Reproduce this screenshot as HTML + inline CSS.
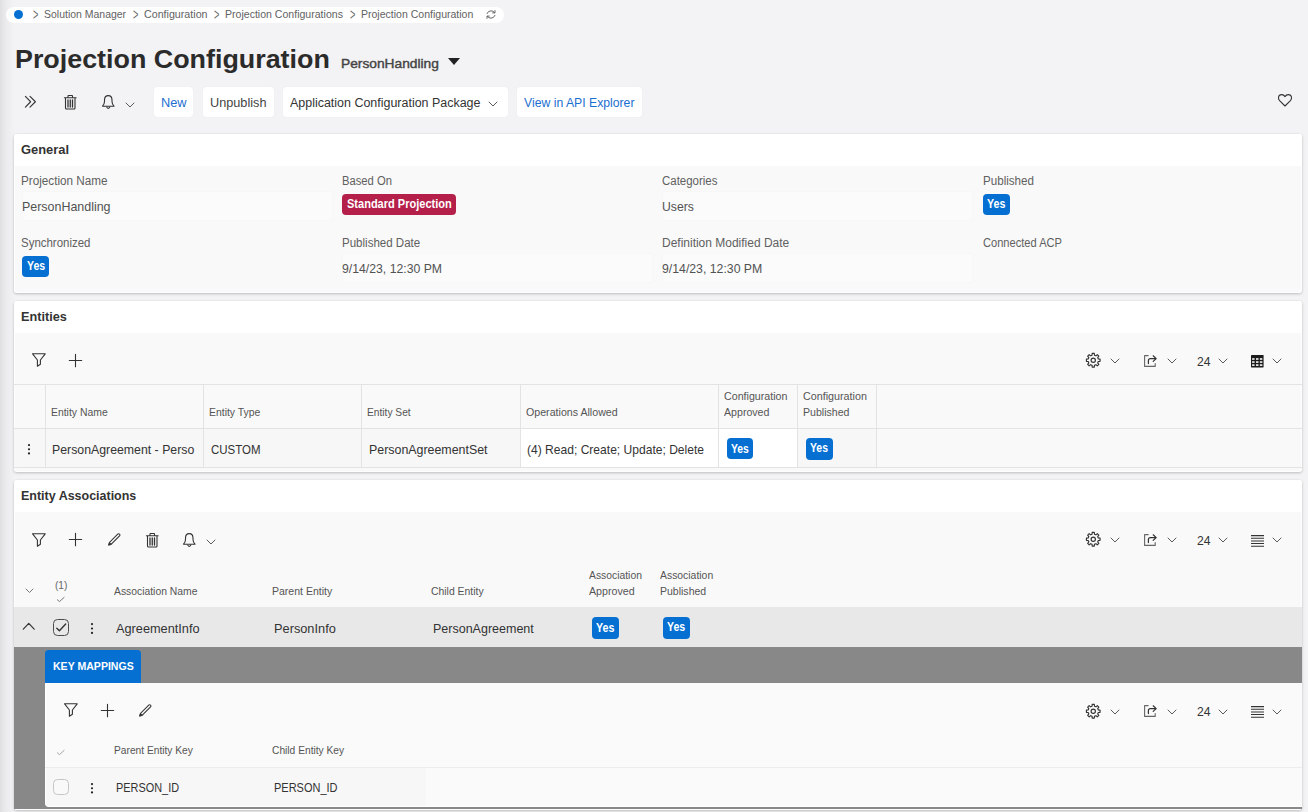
<!DOCTYPE html>
<html lang="en"><head><meta charset="utf-8"><title>Projection Configuration</title>
<style>
*{box-sizing:border-box;margin:0;padding:0}
html,body{width:1308px;height:812px;overflow:hidden;background:#f3f2f4;font-family:"Liberation Sans",sans-serif}
#root{position:relative;width:1308px;height:812px;overflow:hidden;background:linear-gradient(90deg,#dfdee1 0,#e6e5e8 3px,#ecebee 7px,#f1f0f3 12px,#f3f2f4 16px,#f3f2f4 100%)}
.t{position:absolute;white-space:nowrap;display:block;transform-origin:0 50%}
.b{position:absolute;display:block}
svg{position:absolute;overflow:visible}
.card{position:absolute;background:#f9f9f9;border-radius:3px;box-shadow:0 1px 3px rgba(0,0,0,.22),0 0 1px rgba(0,0,0,.12),inset 0 0 0 1px rgba(255,255,255,.85)}
.hd{position:absolute;left:0;top:0;right:0;background:#fff;border-radius:3px 3px 0 0}
.btn{position:absolute;background:#fff;border-radius:3px;box-shadow:0 0 1px rgba(0,0,0,.10)}
.fld{position:absolute;background:#fbfbfb;border:1px solid #f7f7f7;border-radius:2px}
.yes{position:absolute;background:#0670d2;border-radius:4px;width:26.8px;height:21.2px}
.vl{position:absolute;width:1px;background:#e3e3e3}
.hl{position:absolute;height:1px;background:#e3e3e3}

</style></head><body>
<div id="root">
<div class="b" style="left:5.5px;top:7px;width:498.5px;height:15.6px;border-radius:8px;background:#fff"></div>
<div class="b" style="left:13.6px;top:10.2px;width:9.2px;height:9.2px;border-radius:50%;background:#0670d2"></div>
<span class="t" style="left:33.050000000000004px;top:7.1px;font-size:11px;line-height:14px;color:#6a6a6a;transform-origin:0 50%;transform:scale(0.84,1.42)">&gt;</span>
<span class="t" style="left:133.04999999999998px;top:7.1px;font-size:11px;line-height:14px;color:#6a6a6a;transform-origin:0 50%;transform:scale(0.84,1.42)">&gt;</span>
<span class="t" style="left:213.64999999999998px;top:7.1px;font-size:11px;line-height:14px;color:#6a6a6a;transform-origin:0 50%;transform:scale(0.84,1.42)">&gt;</span>
<span class="t" style="left:349.65px;top:7.1px;font-size:11px;line-height:14px;color:#6a6a6a;transform-origin:0 50%;transform:scale(0.84,1.42)">&gt;</span>
<svg style="left:486px;top:10.3px" width="10" height="9" viewBox="0 0 10 9" fill="none" stroke="#333" stroke-width="1.1" stroke-linecap="round" stroke-linejoin="round"><path d="M1 3.6 Q2.2 0.8 5 0.8 Q7.3 0.8 8.6 2.6 M9 0.6 V2.9 H6.7 M9 5.4 Q7.8 8.2 5 8.2 Q2.7 8.2 1.4 6.4 M1 8.4 V6.1 H3.3" stroke="#555" stroke-width="0.9"/></svg>
<svg style="left:448px;top:58px" width="12" height="7" viewBox="0 0 12 7"><path d="M0 0 H12 L6 7 Z" fill="#222"/></svg>
<svg style="left:25px;top:96.2px" width="11" height="11.5" viewBox="0 0 11 11.5" fill="none" stroke="#333" stroke-width="1.1" stroke-linecap="round" stroke-linejoin="round"><path d="M0.4 0.4 L5.6 5.75 L0.4 11.1 M5 0.4 L10.4 5.75 L5 11.1"/></svg>
<svg style="left:64.4px;top:94.9px" width="12.5" height="14.5" viewBox="0 0 12.5 14.5" fill="none" stroke="#333" stroke-width="1.1" stroke-linecap="round" stroke-linejoin="round"><path d="M0.4 2.8 H12.1 M4 2.6 V1 Q4 0.5 4.5 0.5 H8 Q8.5 0.5 8.5 1 V2.6 M1.5 3 V13 Q1.5 14 2.5 14 H10 Q11 14 11 13 V3"/><path d="M4 5 V12 M6.25 5 V12 M8.5 5 V12" stroke-width="1.3"/></svg>
<svg style="left:101.8px;top:94.9px" width="12.5" height="14.3" viewBox="0 0 12.5 14.3" fill="none" stroke="#333" stroke-width="1.1" stroke-linecap="round" stroke-linejoin="round"><path d="M0.5 11.2 H12 Q10 9 10 6.5 V5 Q10 0.6 6.25 0.6 Q2.5 0.6 2.5 5 V6.5 Q2.5 9 0.5 11.2 Z"/><path d="M4.8 12.2 Q6.25 14.6 7.7 12.2"/></svg>
<svg style="left:125.0px;top:101.5px" width="10" height="6" viewBox="0 0 10 6" fill="none" stroke="#5a5a5a" stroke-width="1.0" stroke-linecap="round" stroke-linejoin="round"><path d="M1 1 L5.0 5 L9 1"/></svg>
<div class="btn" style="left:154px;top:87px;width:39px;height:30px"></div>
<div class="btn" style="left:202.5px;top:87px;width:71.5px;height:30px"></div>
<div class="btn" style="left:283px;top:87px;width:224.5px;height:30px"></div>
<div class="btn" style="left:516.5px;top:87px;width:125.5px;height:30px"></div>
<svg style="left:487.5px;top:101.0px" width="10" height="6" viewBox="0 0 10 6" fill="none" stroke="#5a5a5a" stroke-width="1.0" stroke-linecap="round" stroke-linejoin="round"><path d="M1 1 L5.0 5 L9 1"/></svg>
<svg style="left:1277.5px;top:94.4px" width="14" height="12.5" viewBox="0 0 14 12.5" fill="none" stroke="#333" stroke-width="1.1" stroke-linecap="round" stroke-linejoin="round"><path d="M7 12 L1.6 6.6 Q0.5 5.4 0.5 4 Q0.5 0.6 3.8 0.6 Q5.8 0.6 7 2.6 Q8.2 0.6 10.2 0.6 Q13.5 0.6 13.5 4 Q13.5 5.4 12.4 6.6 Z"/></svg>
<div class="card" style="left:14px;top:134px;width:1288px;height:158.5px"><div class="hd" style="height:31.5px"></div></div>
<div class="fld" style="left:21.5px;top:190.5px;width:311px;height:30.5px"></div>
<div class="fld" style="left:662px;top:190.5px;width:311px;height:30.5px"></div>
<div class="fld" style="left:342px;top:252.5px;width:311px;height:30.5px"></div>
<div class="fld" style="left:662px;top:252.5px;width:311px;height:30.5px"></div>
<div class="b" style="left:342.25px;top:194.25px;width:113.25px;height:21px;border-radius:4px;background:#b5204b"></div>
<div class="yes" style="left:983.2px;top:194.1px"></div>
<div class="yes" style="left:22.25px;top:256px"></div>
<div class="card" style="left:14px;top:301px;width:1288px;height:171px"><div class="hd" style="height:32px"></div></div>
<svg style="left:32px;top:353.25px" width="14" height="14" viewBox="0 0 14 14" fill="none" stroke="#333" stroke-width="1.1" stroke-linecap="round" stroke-linejoin="round"><path d="M0.6 0.8 H13.2 L8.4 7 V11.2 L5.4 13.2 V7 Z"/></svg>
<svg style="left:69px;top:353.6px" width="13" height="13" viewBox="0 0 13 13" fill="none" stroke="#333" stroke-width="1.1" stroke-linecap="round" stroke-linejoin="round"><path d="M6.5 0.3 V12.7 M0.3 6.5 H12.7"/></svg>
<svg style="left:1084.5px;top:352.15px" width="16.5" height="16.5" viewBox="0 0 16.5 16.5" fill="none" stroke="#333" stroke-width="1.1" stroke-linecap="round" stroke-linejoin="round"><path d="M13.31 7.04 L15.07 7.17 L15.07 9.33 L13.31 9.46 L12.68 10.97 L13.83 12.31 L12.31 13.83 L10.97 12.68 L9.46 13.31 L9.33 15.07 L7.17 15.07 L7.04 13.31 L5.53 12.68 L4.19 13.83 L2.67 12.31 L3.82 10.97 L3.19 9.46 L1.43 9.33 L1.43 7.17 L3.19 7.04 L3.82 5.53 L2.67 4.19 L4.19 2.67 L5.53 3.82 L7.04 3.19 L7.17 1.43 L9.33 1.43 L9.46 3.19 L10.97 3.82 L12.31 2.67 L13.83 4.19 L12.68 5.53 Z" stroke-width="1.15"/><circle cx="8.25" cy="8.25" r="2.15" stroke-width="1.15"/></svg>
<svg style="left:1109.5px;top:358.0px" width="10" height="6" viewBox="0 0 10 6" fill="none" stroke="#5a5a5a" stroke-width="1.0" stroke-linecap="round" stroke-linejoin="round"><path d="M1 1 L5.0 5 L9 1"/></svg>
<svg style="left:1143.75px;top:354.59999999999997px" width="13" height="12" viewBox="0 0 13 12" fill="none" stroke="#333" stroke-width="1.1" stroke-linecap="round" stroke-linejoin="round"><path d="M4.2 0.6 H0.6 V11.4 H11.2 V8.6" stroke="#666"/><path d="M4.4 8.6 V5.6 Q4.4 3.6 6.4 3.6 H11.6 M9.2 0.8 L12.2 3.6 L9.2 6.4" stroke-width="1.2"/></svg>
<svg style="left:1167.0px;top:358.0px" width="10" height="6" viewBox="0 0 10 6" fill="none" stroke="#5a5a5a" stroke-width="1.0" stroke-linecap="round" stroke-linejoin="round"><path d="M1 1 L5.0 5 L9 1"/></svg>
<svg style="left:1218.0px;top:358.0px" width="10" height="6" viewBox="0 0 10 6" fill="none" stroke="#5a5a5a" stroke-width="1.0" stroke-linecap="round" stroke-linejoin="round"><path d="M1 1 L5.0 5 L9 1"/></svg>
<svg style="left:1250.6px;top:355.4px" width="12.6" height="12.4" viewBox="0 0 12.6 12.4"><rect x="0" y="0" width="12.6" height="12.4" rx="0.6" fill="#1c1c1c"/><g fill="#f9f9f9"><rect x="1.10" y="3.20" width="2.5" height="1.6"/><rect x="5.00" y="3.20" width="2.5" height="1.6"/><rect x="8.85" y="3.20" width="2.5" height="1.6"/><rect x="1.10" y="6.25" width="2.5" height="1.6"/><rect x="5.00" y="6.25" width="2.5" height="1.6"/><rect x="8.85" y="6.25" width="2.5" height="1.6"/><rect x="1.10" y="9.30" width="2.5" height="1.6"/><rect x="5.00" y="9.30" width="2.5" height="1.6"/><rect x="8.85" y="9.30" width="2.5" height="1.6"/></g></svg>
<svg style="left:1272.0px;top:358.0px" width="10" height="6" viewBox="0 0 10 6" fill="none" stroke="#5a5a5a" stroke-width="1.0" stroke-linecap="round" stroke-linejoin="round"><path d="M1 1 L5.0 5 L9 1"/></svg>
<div class="hl" style="left:14px;top:384px;width:1288px"></div>
<div class="hl" style="left:14px;top:428px;width:1288px"></div>
<div class="hl" style="left:14px;top:467px;width:1288px"></div>
<div class="b" style="left:14px;top:429px;width:506px;height:38px;background:#f7f7f7"></div>
<div class="b" style="left:520px;top:429px;width:277px;height:38px;background:#fff"></div>
<div class="b" style="left:797px;top:429px;width:79px;height:38px;background:#f7f7f7"></div>
<div class="vl" style="left:45px;top:385px;height:82px"></div>
<div class="vl" style="left:203px;top:385px;height:82px"></div>
<div class="vl" style="left:361px;top:385px;height:82px"></div>
<div class="vl" style="left:520px;top:385px;height:82px"></div>
<div class="vl" style="left:718px;top:385px;height:82px"></div>
<div class="vl" style="left:797px;top:385px;height:82px"></div>
<div class="vl" style="left:876px;top:385px;height:82px"></div>
<svg style="left:26.75px;top:444.25px" width="4" height="10.5" viewBox="0 0 4 10.5"><circle cx="2" cy="1.1" r="1.1" fill="#222"/><circle cx="2" cy="5.25" r="1.1" fill="#222"/><circle cx="2" cy="9.4" r="1.1" fill="#222"/></svg>
<div class="yes" style="left:726.7px;top:438.2px"></div>
<div class="yes" style="left:806px;top:438px;height:21.5px"></div>
<div class="card" style="left:14px;top:480px;width:1288px;height:330px"><div class="hd" style="height:32px"></div></div>
<svg style="left:32px;top:532.5px" width="14" height="14" viewBox="0 0 14 14" fill="none" stroke="#333" stroke-width="1.1" stroke-linecap="round" stroke-linejoin="round"><path d="M0.6 0.8 H13.2 L8.4 7 V11.2 L5.4 13.2 V7 Z"/></svg>
<svg style="left:69px;top:532.9px" width="13" height="13" viewBox="0 0 13 13" fill="none" stroke="#333" stroke-width="1.1" stroke-linecap="round" stroke-linejoin="round"><path d="M6.5 0.3 V12.7 M0.3 6.5 H12.7"/></svg>
<svg style="left:107.5px;top:533.2px" width="13" height="12.5" viewBox="0 0 13 12.5" fill="none" stroke="#333" stroke-width="1.1" stroke-linecap="round" stroke-linejoin="round"><path d="M0.7 11.9 L1.5 9.3 L10 0.9 Q10.7 0.4 11.5 1.2 Q12.3 2 11.8 2.7 L3.3 11.1 Z" stroke-width="1.05"/><path d="M0.7 11.9 L1.5 9.3 L3.3 11.1 Z" fill="#333" stroke-width="0.6"/></svg>
<svg style="left:145.5px;top:532.5px" width="12.5" height="14.5" viewBox="0 0 12.5 14.5" fill="none" stroke="#333" stroke-width="1.1" stroke-linecap="round" stroke-linejoin="round"><path d="M0.4 2.8 H12.1 M4 2.6 V1 Q4 0.5 4.5 0.5 H8 Q8.5 0.5 8.5 1 V2.6 M1.5 3 V13 Q1.5 14 2.5 14 H10 Q11 14 11 13 V3"/><path d="M4 5 V12 M6.25 5 V12 M8.5 5 V12" stroke-width="1.3"/></svg>
<svg style="left:183px;top:532.5px" width="12.5" height="14.3" viewBox="0 0 12.5 14.3" fill="none" stroke="#333" stroke-width="1.1" stroke-linecap="round" stroke-linejoin="round"><path d="M0.5 11.2 H12 Q10 9 10 6.5 V5 Q10 0.6 6.25 0.6 Q2.5 0.6 2.5 5 V6.5 Q2.5 9 0.5 11.2 Z"/><path d="M4.8 12.2 Q6.25 14.6 7.7 12.2"/></svg>
<svg style="left:206.0px;top:539.0px" width="10" height="6" viewBox="0 0 10 6" fill="none" stroke="#5a5a5a" stroke-width="1.0" stroke-linecap="round" stroke-linejoin="round"><path d="M1 1 L5.0 5 L9 1"/></svg>
<svg style="left:1084.5px;top:531.35px" width="16.5" height="16.5" viewBox="0 0 16.5 16.5" fill="none" stroke="#333" stroke-width="1.1" stroke-linecap="round" stroke-linejoin="round"><path d="M13.31 7.04 L15.07 7.17 L15.07 9.33 L13.31 9.46 L12.68 10.97 L13.83 12.31 L12.31 13.83 L10.97 12.68 L9.46 13.31 L9.33 15.07 L7.17 15.07 L7.04 13.31 L5.53 12.68 L4.19 13.83 L2.67 12.31 L3.82 10.97 L3.19 9.46 L1.43 9.33 L1.43 7.17 L3.19 7.04 L3.82 5.53 L2.67 4.19 L4.19 2.67 L5.53 3.82 L7.04 3.19 L7.17 1.43 L9.33 1.43 L9.46 3.19 L10.97 3.82 L12.31 2.67 L13.83 4.19 L12.68 5.53 Z" stroke-width="1.15"/><circle cx="8.25" cy="8.25" r="2.15" stroke-width="1.15"/></svg>
<svg style="left:1109.5px;top:537.0px" width="10" height="6" viewBox="0 0 10 6" fill="none" stroke="#5a5a5a" stroke-width="1.0" stroke-linecap="round" stroke-linejoin="round"><path d="M1 1 L5.0 5 L9 1"/></svg>
<svg style="left:1143.75px;top:533.8000000000001px" width="13" height="12" viewBox="0 0 13 12" fill="none" stroke="#333" stroke-width="1.1" stroke-linecap="round" stroke-linejoin="round"><path d="M4.2 0.6 H0.6 V11.4 H11.2 V8.6" stroke="#666"/><path d="M4.4 8.6 V5.6 Q4.4 3.6 6.4 3.6 H11.6 M9.2 0.8 L12.2 3.6 L9.2 6.4" stroke-width="1.2"/></svg>
<svg style="left:1167.0px;top:537.0px" width="10" height="6" viewBox="0 0 10 6" fill="none" stroke="#5a5a5a" stroke-width="1.0" stroke-linecap="round" stroke-linejoin="round"><path d="M1 1 L5.0 5 L9 1"/></svg>
<svg style="left:1218.0px;top:537.0px" width="10" height="6" viewBox="0 0 10 6" fill="none" stroke="#5a5a5a" stroke-width="1.0" stroke-linecap="round" stroke-linejoin="round"><path d="M1 1 L5.0 5 L9 1"/></svg>
<svg style="left:1250.5px;top:534.7px" width="13" height="12" viewBox="0 0 13 12" fill="none" stroke="#333" stroke-width="1.05"><path d="M0 0.60 H13 M0 3.25 H13 M0 5.90 H13 M0 8.55 H13 M0 11.20 H13 "/></svg>
<svg style="left:1272.0px;top:537.0px" width="10" height="6" viewBox="0 0 10 6" fill="none" stroke="#5a5a5a" stroke-width="1.0" stroke-linecap="round" stroke-linejoin="round"><path d="M1 1 L5.0 5 L9 1"/></svg>
<svg style="left:25.0px;top:587.75px" width="9" height="5.5" viewBox="0 0 9 5.5" fill="none" stroke="#777" stroke-width="1.0" stroke-linecap="round" stroke-linejoin="round"><path d="M1 1 L4.5 4.5 L8 1"/></svg>
<svg style="left:57px;top:597px" width="7.5" height="5" viewBox="0 0 7.5 5" fill="none" stroke="#777" stroke-width="1.0" stroke-linecap="round" stroke-linejoin="round"><path d="M0.4 2.8 L2.5 4.6 L7.1 0.4"/></svg>
<div class="b" style="left:14px;top:607px;width:1288px;height:40px;background:#e8e8e8"></div>
<svg style="left:23.35px;top:623.25px" width="11.5" height="6.5" viewBox="0 0 11.5 6.5" fill="none" stroke="#333" stroke-width="1.2" stroke-linecap="round" stroke-linejoin="round"><path d="M0.3 6.2 L5.75 0.4 L11.2 6.2"/></svg>
<div class="b" style="left:52.5px;top:619.25px;width:16.5px;height:16.5px;border:1.5px solid #4d4d4d;border-radius:4.5px;background:transparent"></div>
<svg style="left:55.5px;top:623px" width="10.5" height="9" viewBox="0 0 10.5 9" fill="none" stroke="#333" stroke-width="1.35" stroke-linecap="round" stroke-linejoin="round"><path d="M0.8 5.2 L3.4 7.8 L9.7 1"/></svg>
<svg style="left:90.25px;top:623px" width="4" height="11" viewBox="0 0 4 11"><circle cx="2" cy="1.1" r="1.1" fill="#222"/><circle cx="2" cy="5.5" r="1.1" fill="#222"/><circle cx="2" cy="9.9" r="1.1" fill="#222"/></svg>
<div class="yes" style="left:591.8px;top:617px;height:21.5px"></div>
<div class="yes" style="left:663.2px;top:616.5px;height:22px"></div>
<div class="b" style="left:14px;top:647px;width:1288px;height:161.7px;background:#888888"></div>
<div class="b" style="left:45px;top:649.7px;width:96.3px;height:33.3px;background:#0670d2;border-radius:3.5px 3.5px 0 0"></div>
<div class="b" style="left:45px;top:682.8px;width:1257px;height:124.1px;background:#fafafa;border-radius:0 0 0 4px;border-left:1px solid #fff;border-bottom:1px solid #fff"></div>
<svg style="left:63.75px;top:703.25px" width="14" height="14" viewBox="0 0 14 14" fill="none" stroke="#333" stroke-width="1.1" stroke-linecap="round" stroke-linejoin="round"><path d="M0.6 0.8 H13.2 L8.4 7 V11.2 L5.4 13.2 V7 Z"/></svg>
<svg style="left:101.25px;top:703.75px" width="13" height="13" viewBox="0 0 13 13" fill="none" stroke="#333" stroke-width="1.1" stroke-linecap="round" stroke-linejoin="round"><path d="M6.5 0.3 V12.7 M0.3 6.5 H12.7"/></svg>
<svg style="left:139.25px;top:704px" width="13" height="12.5" viewBox="0 0 13 12.5" fill="none" stroke="#333" stroke-width="1.1" stroke-linecap="round" stroke-linejoin="round"><path d="M0.7 11.9 L1.5 9.3 L10 0.9 Q10.7 0.4 11.5 1.2 Q12.3 2 11.8 2.7 L3.3 11.1 Z" stroke-width="1.05"/><path d="M0.7 11.9 L1.5 9.3 L3.3 11.1 Z" fill="#333" stroke-width="0.6"/></svg>
<svg style="left:1084.5px;top:702.65px" width="16.5" height="16.5" viewBox="0 0 16.5 16.5" fill="none" stroke="#333" stroke-width="1.1" stroke-linecap="round" stroke-linejoin="round"><path d="M13.31 7.04 L15.07 7.17 L15.07 9.33 L13.31 9.46 L12.68 10.97 L13.83 12.31 L12.31 13.83 L10.97 12.68 L9.46 13.31 L9.33 15.07 L7.17 15.07 L7.04 13.31 L5.53 12.68 L4.19 13.83 L2.67 12.31 L3.82 10.97 L3.19 9.46 L1.43 9.33 L1.43 7.17 L3.19 7.04 L3.82 5.53 L2.67 4.19 L4.19 2.67 L5.53 3.82 L7.04 3.19 L7.17 1.43 L9.33 1.43 L9.46 3.19 L10.97 3.82 L12.31 2.67 L13.83 4.19 L12.68 5.53 Z" stroke-width="1.15"/><circle cx="8.25" cy="8.25" r="2.15" stroke-width="1.15"/></svg>
<svg style="left:1109.5px;top:708.5px" width="10" height="6" viewBox="0 0 10 6" fill="none" stroke="#5a5a5a" stroke-width="1.0" stroke-linecap="round" stroke-linejoin="round"><path d="M1 1 L5.0 5 L9 1"/></svg>
<svg style="left:1143.75px;top:705.1px" width="13" height="12" viewBox="0 0 13 12" fill="none" stroke="#333" stroke-width="1.1" stroke-linecap="round" stroke-linejoin="round"><path d="M4.2 0.6 H0.6 V11.4 H11.2 V8.6" stroke="#666"/><path d="M4.4 8.6 V5.6 Q4.4 3.6 6.4 3.6 H11.6 M9.2 0.8 L12.2 3.6 L9.2 6.4" stroke-width="1.2"/></svg>
<svg style="left:1167.0px;top:708.5px" width="10" height="6" viewBox="0 0 10 6" fill="none" stroke="#5a5a5a" stroke-width="1.0" stroke-linecap="round" stroke-linejoin="round"><path d="M1 1 L5.0 5 L9 1"/></svg>
<svg style="left:1218.0px;top:708.5px" width="10" height="6" viewBox="0 0 10 6" fill="none" stroke="#5a5a5a" stroke-width="1.0" stroke-linecap="round" stroke-linejoin="round"><path d="M1 1 L5.0 5 L9 1"/></svg>
<svg style="left:1250.5px;top:706.0px" width="13" height="12" viewBox="0 0 13 12" fill="none" stroke="#333" stroke-width="1.05"><path d="M0 0.60 H13 M0 3.25 H13 M0 5.90 H13 M0 8.55 H13 M0 11.20 H13 "/></svg>
<svg style="left:1272.0px;top:708.5px" width="10" height="6" viewBox="0 0 10 6" fill="none" stroke="#5a5a5a" stroke-width="1.0" stroke-linecap="round" stroke-linejoin="round"><path d="M1 1 L5.0 5 L9 1"/></svg>
<svg style="left:57px;top:750px" width="7.5" height="5" viewBox="0 0 7.5 5" fill="none" stroke="#999" stroke-width="0.9" stroke-linecap="round" stroke-linejoin="round"><path d="M0.4 2.8 L2.5 4.6 L7.1 0.4"/></svg>
<div class="hl" style="left:45px;top:766.5px;width:1257px;background:#ececec"></div>
<div class="b" style="left:46px;top:767.5px;width:380px;height:38.4px;background:#f7f7f7;border-radius:0 0 0 3px"></div>
<div class="b" style="left:52.8px;top:779px;width:16.2px;height:16.2px;border:1.4px solid #c6c6c6;border-radius:4.5px;background:#f9f9f9"></div>
<svg style="left:90.25px;top:782.5px" width="4" height="10.5" viewBox="0 0 4 10.5"><circle cx="2" cy="1.1" r="1.1" fill="#222"/><circle cx="2" cy="5.25" r="1.1" fill="#222"/><circle cx="2" cy="9.4" r="1.1" fill="#222"/></svg>
<span class="t m" style="left:44.34px;top:6.92px;font-size:11.5px;line-height:15px;font-weight:400;color:#626262;transform:scaleX(0.9109);">Solution Manager</span>
<span class="t m" style="left:143.94px;top:6.92px;font-size:11.5px;line-height:15px;font-weight:400;color:#626262;transform:scaleX(0.9286);">Configuration</span>
<span class="t m" style="left:225.14px;top:6.92px;font-size:11.5px;line-height:15px;font-weight:400;color:#626262;transform:scaleX(0.9177);">Projection Configurations</span>
<span class="t m" style="left:360.54px;top:6.92px;font-size:11.5px;line-height:15px;font-weight:400;color:#626262;transform:scaleX(0.9150);">Projection Configuration</span>
<span class="t m" style="left:14.54px;top:41.62px;font-size:26.5px;line-height:34px;font-weight:700;color:#2b2b2b;transform:scaleX(1.0135);">Projection Configuration</span>
<span class="t m" style="left:341.48px;top:54.70px;font-size:13px;line-height:17px;font-weight:400;color:#444;transform:scaleX(1.0586);-webkit-text-stroke:0.4px #444;">PersonHandling</span>
<span class="t m" style="left:161.25px;top:94.67px;font-size:12.5px;line-height:16px;font-weight:400;color:#1b6fd0;transform:scaleX(1.0194);">New</span>
<span class="t m" style="left:210.25px;top:94.67px;font-size:12.5px;line-height:16px;font-weight:400;color:#444;transform:scaleX(1.0163);">Unpublish</span>
<span class="t m" style="left:290.00px;top:94.67px;font-size:12.5px;line-height:16px;font-weight:400;color:#333;transform:scaleX(0.9968);">Application Configuration Package</span>
<span class="t m" style="left:524.00px;top:94.67px;font-size:12.5px;line-height:16px;font-weight:400;color:#1b6fd0;transform:scaleX(0.9776);">View in API Explorer</span>
<span class="t m" style="left:20.97px;top:141.39px;font-size:13.3px;line-height:17px;font-weight:700;color:#333;transform:scaleX(0.9704);">General</span>
<span class="t m" style="left:21.02px;top:172.84px;font-size:12px;line-height:16px;font-weight:400;color:#606060;transform:scaleX(0.9745);">Projection Name</span>
<span class="t m" style="left:341.52px;top:172.84px;font-size:12px;line-height:16px;font-weight:400;color:#606060;transform:scaleX(0.9360);">Based On</span>
<span class="t m" style="left:661.52px;top:172.84px;font-size:12px;line-height:16px;font-weight:400;color:#606060;transform:scaleX(0.9557);">Categories</span>
<span class="t m" style="left:982.52px;top:172.84px;font-size:12px;line-height:16px;font-weight:400;color:#606060;transform:scaleX(0.9666);">Published</span>
<span class="t m" style="left:21.98px;top:198.25px;font-size:13px;line-height:17px;font-weight:400;color:#525252;transform:scaleX(0.9570);">PersonHandling</span>
<span class="t m" style="left:346.52px;top:196.09px;font-size:12px;line-height:16px;font-weight:700;color:#fff;transform:scaleX(0.9183);">Standard Projection</span>
<span class="t m" style="left:662.23px;top:198.25px;font-size:13px;line-height:17px;font-weight:400;color:#525252;transform:scaleX(0.9363);">Users</span>
<span class="t m" style="left:987.22px;top:196.24px;font-size:12px;line-height:16px;font-weight:700;color:#fff;transform:scaleX(0.8868);">Yes</span>
<span class="t m" style="left:21.02px;top:234.59px;font-size:12px;line-height:16px;font-weight:400;color:#606060;transform:scaleX(0.9552);">Synchronized</span>
<span class="t m" style="left:341.52px;top:234.59px;font-size:12px;line-height:16px;font-weight:400;color:#606060;transform:scaleX(0.9609);">Published Date</span>
<span class="t m" style="left:661.52px;top:234.59px;font-size:12px;line-height:16px;font-weight:400;color:#606060;transform:scaleX(0.9985);">Definition Modified Date</span>
<span class="t m" style="left:982.52px;top:234.59px;font-size:12px;line-height:16px;font-weight:400;color:#606060;transform:scaleX(0.9247);">Connected ACP</span>
<span class="t m" style="left:26.52px;top:258.34px;font-size:12px;line-height:16px;font-weight:700;color:#fff;transform:scaleX(0.8796);">Yes</span>
<span class="t m" style="left:341.98px;top:259.50px;font-size:13px;line-height:17px;font-weight:400;color:#525252;transform:scaleX(0.9416);">9/14/23, 12:30 PM</span>
<span class="t m" style="left:662.23px;top:259.50px;font-size:13px;line-height:17px;font-weight:400;color:#525252;transform:scaleX(0.9439);">9/14/23, 12:30 PM</span>
<span class="t m" style="left:20.97px;top:308.39px;font-size:13.3px;line-height:17px;font-weight:700;color:#333;transform:scaleX(0.9538);">Entities</span>
<span class="t m" style="left:50.79px;top:404.77px;font-size:11.5px;line-height:15px;font-weight:400;color:#555555;transform:scaleX(0.9047);">Entity Name</span>
<span class="t m" style="left:209.04px;top:404.77px;font-size:11.5px;line-height:15px;font-weight:400;color:#555555;transform:scaleX(0.9071);">Entity Type</span>
<span class="t m" style="left:367.29px;top:404.77px;font-size:11.5px;line-height:15px;font-weight:400;color:#555555;transform:scaleX(0.8873);">Entity Set</span>
<span class="t m" style="left:525.79px;top:404.77px;font-size:11.5px;line-height:15px;font-weight:400;color:#555555;transform:scaleX(0.9251);">Operations Allowed</span>
<span class="t m" style="left:724.04px;top:389.02px;font-size:11.5px;line-height:15px;font-weight:400;color:#555555;transform:scaleX(0.9271);">Configuration</span>
<span class="t m" style="left:724.04px;top:404.77px;font-size:11.5px;line-height:15px;font-weight:400;color:#555555;transform:scaleX(0.9225);">Approved</span>
<span class="t m" style="left:803.04px;top:389.02px;font-size:11.5px;line-height:15px;font-weight:400;color:#555555;transform:scaleX(0.9344);">Configuration</span>
<span class="t m" style="left:803.04px;top:404.77px;font-size:11.5px;line-height:15px;font-weight:400;color:#555555;transform:scaleX(0.9189);">Published</span>
<span class="t m" style="left:52.23px;top:441.25px;font-size:13px;line-height:17px;font-weight:400;color:#333;transform:scaleX(0.9467);">PersonAgreement - Perso</span>
<span class="t m" style="left:210.98px;top:441.25px;font-size:13px;line-height:17px;font-weight:400;color:#333;transform:scaleX(0.8829);">CUSTOM</span>
<span class="t m" style="left:368.98px;top:441.25px;font-size:13px;line-height:17px;font-weight:400;color:#333;transform:scaleX(0.9537);">PersonAgreementSet</span>
<span class="t m" style="left:527.48px;top:441.25px;font-size:13px;line-height:17px;font-weight:400;color:#333;transform:scaleX(0.9280);">(4) Read; Create; Update; Delete</span>
<span class="t m" style="left:730.92px;top:441.24px;font-size:12px;line-height:16px;font-weight:700;color:#fff;transform:scaleX(0.8627);">Yes</span>
<span class="t m" style="left:809.92px;top:440.34px;font-size:12px;line-height:16px;font-weight:700;color:#fff;transform:scaleX(0.8675);">Yes</span>
<span class="t m" style="left:1197.48px;top:352.50px;font-size:13px;line-height:17px;font-weight:400;color:#333;transform:scaleX(0.9358);">24</span>
<span class="t m" style="left:20.97px;top:487.39px;font-size:13.3px;line-height:17px;font-weight:700;color:#333;transform:scaleX(0.9382);">Entity Associations</span>
<span class="t m" style="left:1197.48px;top:531.75px;font-size:13px;line-height:17px;font-weight:400;color:#333;transform:scaleX(0.9358);">24</span>
<span class="t m" style="left:54.56px;top:578.39px;font-size:11px;line-height:14px;font-weight:400;color:#666;transform:scaleX(0.9202);">(1)</span>
<span class="t m" style="left:114.04px;top:583.52px;font-size:11.5px;line-height:15px;font-weight:400;color:#555555;transform:scaleX(0.9000);">Association Name</span>
<span class="t m" style="left:272.29px;top:583.52px;font-size:11.5px;line-height:15px;font-weight:400;color:#555555;transform:scaleX(0.9138);">Parent Entity</span>
<span class="t m" style="left:430.79px;top:583.52px;font-size:11.5px;line-height:15px;font-weight:400;color:#555555;transform:scaleX(0.9054);">Child Entity</span>
<span class="t m" style="left:589.04px;top:567.77px;font-size:11.5px;line-height:15px;font-weight:400;color:#555555;transform:scaleX(0.8998);">Association</span>
<span class="t m" style="left:589.04px;top:583.52px;font-size:11.5px;line-height:15px;font-weight:400;color:#555555;transform:scaleX(0.9276);">Approved</span>
<span class="t m" style="left:660.29px;top:567.77px;font-size:11.5px;line-height:15px;font-weight:400;color:#555555;transform:scaleX(0.9041);">Association</span>
<span class="t m" style="left:660.29px;top:583.52px;font-size:11.5px;line-height:15px;font-weight:400;color:#555555;transform:scaleX(0.9140);">Published</span>
<span class="t m" style="left:115.73px;top:620.00px;font-size:13px;line-height:17px;font-weight:400;color:#333;transform:scaleX(0.9796);">AgreementInfo</span>
<span class="t m" style="left:273.98px;top:620.00px;font-size:13px;line-height:17px;font-weight:400;color:#333;transform:scaleX(0.9827);">PersonInfo</span>
<span class="t m" style="left:432.73px;top:620.00px;font-size:13px;line-height:17px;font-weight:400;color:#333;transform:scaleX(0.9619);">PersonAgreement</span>
<span class="t m" style="left:595.92px;top:619.84px;font-size:12px;line-height:16px;font-weight:700;color:#fff;transform:scaleX(0.8868);">Yes</span>
<span class="t m" style="left:667.22px;top:619.24px;font-size:12px;line-height:16px;font-weight:700;color:#fff;transform:scaleX(0.8772);">Yes</span>
<span class="t m" style="left:52.64px;top:658.82px;font-size:11.5px;line-height:15px;font-weight:700;color:#fff;transform:scaleX(0.9174);">KEY MAPPINGS</span>
<span class="t m" style="left:1197.48px;top:703.00px;font-size:13px;line-height:17px;font-weight:400;color:#333;transform:scaleX(0.9358);">24</span>
<span class="t m" style="left:114.04px;top:743.02px;font-size:11.5px;line-height:15px;font-weight:400;color:#555555;transform:scaleX(0.8881);">Parent Entity Key</span>
<span class="t m" style="left:272.29px;top:743.02px;font-size:11.5px;line-height:15px;font-weight:400;color:#555555;transform:scaleX(0.8889);">Child Entity Key</span>
<span class="t m" style="left:115.98px;top:779.00px;font-size:13px;line-height:17px;font-weight:400;color:#333;transform:scaleX(0.8390);">PERSON_ID</span>
<span class="t m" style="left:273.98px;top:779.00px;font-size:13px;line-height:17px;font-weight:400;color:#333;transform:scaleX(0.8456);">PERSON_ID</span>
</div>
</body></html>
